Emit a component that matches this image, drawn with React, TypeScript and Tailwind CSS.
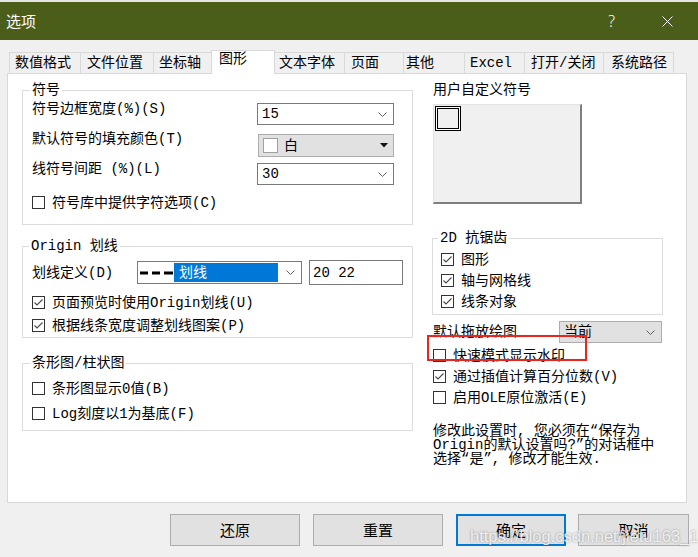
import React from "react";

type Tab = { label: string; w: string; pl: string; selected?: boolean; noLeft?: boolean; last?: boolean };

const tabs: Tab[] = [
  { label: "数值格式", w: "w-[71px]", pl: "pl-[5px]" },
  { label: "文件位置", w: "w-[73px]", pl: "pl-[6px]" },
  { label: "坐标轴", w: "w-[58px]", pl: "pl-[5px]" },
  { label: "图形", w: "w-[64px]", pl: "pl-[7px]", selected: true },
  { label: "文本字体", w: "w-[69px]", pl: "pl-[4px]", noLeft: true },
  { label: "页面", w: "w-[59px]", pl: "pl-[6px]" },
  { label: "其他", w: "w-[61px]", pl: "pl-[2px]" },
  { label: "Excel", w: "w-[60px]", pl: "pl-[5px]" },
  { label: "打开/关闭", w: "w-[79px]", pl: "pl-[6px]" },
  { label: "系统路径", w: "w-[71px]", pl: "pl-[7px]", last: true },
];

function Chevron() {
  return (
    <svg width="9" height="5" viewBox="0 0 9 5">
      <path d="M0.5 0.5 L4.5 4.5 L8.5 0.5" fill="none" stroke="#5f5f5f" strokeWidth="1" />
    </svg>
  );
}

function Combo({ value, gray = false }: { value: string; gray?: boolean }) {
  return (
    <div
      className={`flex items-center h-full w-full border pl-[4px] pr-[6px] ${
        gray ? "bg-[#e1e1e1] border-[#adadad]" : "bg-white border-[#7a7a7a]"
      }`}
    >
      <span className="leading-[16px]">{value}</span>
      <span className="ml-auto flex">
        <Chevron />
      </span>
    </div>
  );
}

function Check({ checked = false, label }: { checked?: boolean; label: string }) {
  return (
    <div className="flex items-center h-[13px] gap-[7px]">
      <span className="w-[13px] h-[13px] shrink-0 border border-[#333333] bg-white flex items-center justify-center">
        {checked && (
          <svg width="11" height="11" viewBox="0 0 11 11">
            <path d="M1.5 5.5 L4 8 L9.5 2.5" fill="none" stroke="#4a4a4a" strokeWidth="1.1" />
          </svg>
        )}
      </span>
      <span className="leading-[16px] whitespace-nowrap">{label}</span>
    </div>
  );
}

export default function App() {
  return (
    <div className="relative w-[698px] h-[557px] overflow-hidden bg-[#f0f0f0] text-[14px] text-black font-['Liberation_Mono','Noto_Sans_CJK_SC',monospace]">
      <div className="h-[2px] bg-[#e6e6e6]" />

      {/* 标题栏 */}
      <div className="h-[38px] bg-[#4a5d19] flex items-center pl-[6px] pr-[25px] text-white">
        <span className="text-[15px] leading-[20px] font-['Noto_Sans_CJK_SC',sans-serif]">选项</span>
        <span className="ml-auto text-[16px] leading-[20px] font-light font-['Noto_Sans',sans-serif]">?</span>
        <svg className="ml-[47px]" width="11" height="11" viewBox="0 0 11 11">
          <path d="M0.5 0.5 L10.5 10.5 M10.5 0.5 L0.5 10.5" stroke="white" strokeWidth="1" />
        </svg>
      </div>

      {/* 选项卡 */}
      <div className="relative z-10 h-[33px] flex items-end pl-[9px]">
        {tabs.map((t) =>
          t.selected ? (
            <div
              key={t.label}
              className={`${t.w} ${t.pl} h-[24px] -mb-[1px] bg-white border-t border-l border-r border-[#d9d9d9] leading-[16px] whitespace-nowrap`}
            >
              {t.label}
            </div>
          ) : (
            <div
              key={t.label}
              className={`${t.w} ${t.pl} h-[21px] pt-[2px] border-t border-[#d9d9d9] ${t.noLeft ? "" : "border-l"} ${
                t.last ? "border-r" : ""
              } leading-[16px] whitespace-nowrap`}
            >
              {t.label}
            </div>
          )
        )}
      </div>

      {/* 面板 */}
      <div className="ml-[7px] w-[680px] h-[430px] bg-white border border-[#d9d9d9] flex pl-[14px] pt-[8px]">
        {/* 左列 */}
        <div className="w-[391px] flex flex-col">
          <fieldset className="border border-[#dcdcdc] pb-[15px]">
            <legend className="ml-[7px] px-[2px] leading-[16px]">符号</legend>
            <div className="pl-[9px]">
              <div className="mt-[5px] flex items-start h-[22px]">
                <span className="w-[225px] -mt-[2px] leading-[16px] whitespace-nowrap">符号边框宽度(%)(S)</span>
                <div className="w-[137px] h-[22px]">
                  <Combo value="15" />
                </div>
              </div>
              <div className="mt-[9px] flex items-start h-[23px]">
                <span className="w-[226px] -mt-[3px] leading-[16px] whitespace-nowrap">默认符号的填充颜色(T)</span>
                <div className="w-[136px] h-[23px] bg-[#e1e1e1] border border-[#adadad] flex items-center pl-[4px] pr-[5px]">
                  <span className="w-[15px] h-[15px] bg-white border border-[#a0a0a0]" />
                  <span className="ml-[6px] leading-[16px]">白</span>
                  <svg className="ml-auto" width="8" height="5" viewBox="0 0 8 5">
                    <path d="M0 0 L8 0 L4 4.5 Z" fill="#111" />
                  </svg>
                </div>
              </div>
              <div className="mt-[6px] flex items-start h-[22px]">
                <span className="w-[225px] -mt-[2px] leading-[16px] whitespace-nowrap">线符号间距 (%)(L)</span>
                <div className="w-[137px] h-[22px]">
                  <Combo value="30" />
                </div>
              </div>
              <div className="mt-[11px]">
                <Check label="符号库中提供字符选项(C)" />
              </div>
            </div>
          </fieldset>

          <fieldset className="mt-[13px] border border-[#dcdcdc] pb-[5px]">
            <legend className="ml-[6px] px-[2px] leading-[16px]">Origin 划线</legend>
            <div className="pl-[9px]">
              <div className="mt-[6px] flex items-center h-[25px]">
                <span className="w-[105px] leading-[16px] whitespace-nowrap">划线定义(D)</span>
                <div className="w-[165px] h-[23px] border border-[#7a7a7a] bg-white p-[1px] flex items-center pr-[6px]">
                  <div className="h-full w-[139px] bg-[#0078d7] flex items-center">
                    <div className="h-full w-[35px] bg-white flex items-center">
                      <svg width="35" height="6" viewBox="0 0 35 6">
                        <path d="M1 3 L9 3 M13 3 L21 3 M25 3 L34 3" stroke="#000" strokeWidth="3" />
                      </svg>
                    </div>
                    <span className="ml-[5px] text-white leading-[16px]">划线</span>
                  </div>
                  <span className="ml-auto flex">
                    <Chevron />
                  </span>
                </div>
                <div className="ml-[7px] w-[94px] h-[25px] border border-[#7a7a7a] bg-white flex items-center pl-[3px]">
                  <span className="leading-[16px]">20 22</span>
                </div>
              </div>
              <div className="mt-[11px]">
                <Check checked label="页面预览时使用Origin划线(U)" />
              </div>
              <div className="mt-[10px]">
                <Check checked label="根据线条宽度调整划线图案(P)" />
              </div>
            </div>
          </fieldset>

          <fieldset className="mt-[17px] border border-[#dcdcdc] pb-[10px]">
            <legend className="ml-[7px] px-[2px] leading-[16px]">条形图/柱状图</legend>
            <div className="pl-[9px]">
              <div className="mt-[11px]">
                <Check label="条形图显示0值(B)" />
              </div>
              <div className="mt-[12px]">
                <Check label="Log刻度以1为基底(F)" />
              </div>
            </div>
          </fieldset>
        </div>

        {/* 右列 */}
        <div className="ml-[19px] w-[231px] flex flex-col">
          <span className="pl-[1px] leading-[16px]">用户自定义符号</span>
          <div className="mt-[6px] ml-[1px] w-[149px] h-[100px] bg-[#f0f0f0] border-t border-l border-[#e3e3e3] border-r-2 border-b-2 border-r-[#7f7f7f] border-b-[#7f7f7f] p-[1px]">
            <div className="w-[26px] h-[25px] border border-black bg-white p-[1px]">
              <div className="w-full h-full border border-black bg-[#f0f0f0]" />
            </div>
          </div>

          <fieldset className="mt-[26px] border border-[#dcdcdc] pb-[6px]">
            <legend className="ml-[5px] px-[2px] leading-[16px]">2D 抗锯齿</legend>
            <div className="pl-[8px]">
              <div className="mt-[7px]">
                <Check checked label="图形" />
              </div>
              <div className="mt-[8px]">
                <Check checked label="轴与网格线" />
              </div>
              <div className="mt-[8px]">
                <Check checked label="线条对象" />
              </div>
            </div>
          </fieldset>

          <div className="mt-[6px] flex items-center h-[22px] pl-[1px]">
            <span className="w-[126px] leading-[16px] whitespace-nowrap">默认拖放绘图</span>
            <div className="w-[103px] h-[22px]">
              <Combo value="当前" gray />
            </div>
          </div>

          <div className="mt-[6px] pl-[1px]">
            <Check label="快速模式显示水印" />
          </div>
          <div className="mt-[8px] pl-[1px]">
            <Check checked label="通过插值计算百分位数(V)" />
          </div>
          <div className="mt-[8px] pl-[1px]">
            <Check label="启用OLE原位激活(E)" />
          </div>

          <p className="mt-[20px] pl-[1px] leading-[14px] whitespace-nowrap">
            修改此设置时, 您必须在“保存为
            <br />
            Origin的默认设置吗?”的对话框中
            <br />
            选择“是”, 修改才能生效.
          </p>
        </div>
      </div>

      {/* 按钮 */}
      <div className="mt-[11px] flex pl-[170px] text-[15px] font-['Noto_Sans_CJK_SC',sans-serif]">
        <button className="w-[130px] h-[32px] bg-[#e1e1e1] border border-[#adadad] flex items-center justify-center leading-[20px]">
          还原
        </button>
        <button className="ml-[13px] w-[130px] h-[32px] bg-[#e1e1e1] border border-[#adadad] flex items-center justify-center leading-[20px]">
          重置
        </button>
        <button className="ml-[13px] w-[110px] h-[32px] bg-[#e1e1e1] border-2 border-[#0078d7] flex items-center justify-center leading-[20px]">
          确定
        </button>
        <button className="ml-[12px] w-[111px] h-[32px] bg-[#e1e1e1] border border-[#adadad] flex items-center justify-center leading-[20px]">
          取消
        </button>
      </div>

      {/* 标注 */}
      <div className="absolute left-[427px] top-[335px] w-[160px] h-[26px] border-2 border-[#e8261e]" />
      <div className="absolute left-[470px] top-[527px] text-[16.5px] leading-[19px] whitespace-nowrap text-white/85 font-['Liberation_Sans',sans-serif] [text-shadow:0_0_2px_rgba(0,0,0,0.45)]">
        https://blog.csdn.net/jietu163_1
      </div>
    </div>
  );
}
